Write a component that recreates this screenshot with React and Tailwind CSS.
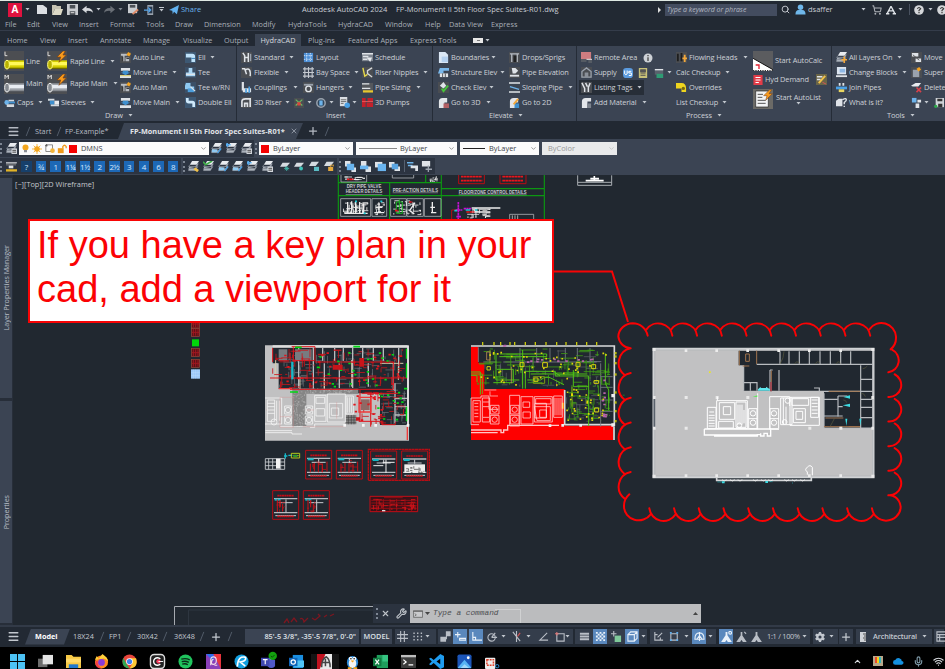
import React from 'react';
import { FaGear } from 'react-icons/fa6';
import { Menu, Search, ShoppingCart, Wrench, X, Plus, Wifi, Mic, ChevronUp, ChevronDown } from 'lucide-react';

/* ---------- small drawings, all on a 12 x 12 grid ---------- */
const W = '#dfe3e8';
const B = '#6db3ea';
const dark = <rect width="12" height="12" fill="#4a4d52" />;
const stack = (
  <>
    <path d="M4.500 0H12L9.500 4H2z" fill="#e8ebef" />
    <path d="M2 4L.500 6H8l3-4v2L8.500 8H.8M.8 8L.5 10.500H8L11 6" fill="#aab1bb" stroke="#7f8792" strokeWidth=".5" />
  </>
);
const glyphs = {
  autoL: <>{dark}<path d="M1 2h7v2H5v6H3V4H1zM6 6h4v4H6z" fill="#b9bdc3" /><path d="M9 0l3 2-2 3-3-2z" fill="#f4a321" /><path d="M3 5v5M7 7h3" stroke="#222" /></>,
  moveL: <><path d="M1 1h10v3H1zM0 9h12v3H0z" fill={W} /><path d="M3 4h6v2h2L6 9 1 6h2z" fill="#3e8fce" /><path d="M0 9.500h12" stroke="#e8d560" strokeWidth="1" /></>,
  moveM: <><path d="M1 1h10v3H1zM0 9h12v3H0z" fill={W} /><path d="M3 4h6v2h2L6 9 1 6h2z" fill="#3e8fce" /></>,
  ell: <><rect width="12" height="12" fill="#3d5873" /><path d="M1 2h7q3 0 3 3v6H7V6H1z" fill="#bfe2fa" /><path d="M7 7h4" stroke="#2f79b5" /></>,
  tee: <><rect width="12" height="12" fill="#3b4f66" /><path d="M4 1h4v5h3v4H1V6h3z" fill="#a9d6f5" /><path d="M1 8h10" stroke={W} strokeWidth="1.400" /></>,
  teew: <><rect width="12" height="12" fill="#3b4f66" /><path d="M1 1h5v4h4v3H0V4z" fill="#8ec9f2" /><path d="M3 7h7v4H3z" fill="#4b9ddc" /><path d="M6 5l5 5" stroke={W} strokeWidth="1.400" /></>,
  dbl: <><rect width="12" height="12" fill="#3d5873" /><path d="M1 1h3v3h4q3 0 3 3v4H8V7H4Q1 7 1 4z" fill="#cfe9fb" /></>,
  cap: <><circle cx="3" cy="6" r="2.600" fill={B} /><path d="M5 3h6v2H5zM3 8h8v3H3z" fill="#d4d9df" /><path d="M5 5h7v2H5z" fill="#3e8fce" /></>,
  sleeve: <><path d="M0 2h7v2H0zM3 8h9v2H3z" fill="#d4d9df" /><path d="M2 4h5v4H2z" fill="#3e8fce" /><path d="M7 4h5v4H7z" fill="#e8ebef" /></>,
  std: <>{dark}<path d="M2 1l2 3v7M8 1v10M4 6h4" stroke={W} strokeWidth="1.700" fill="none" /><path d="M10.500 2v8" stroke="#9aa2ad" strokeWidth="1.400" /></>,
  flex: <>{dark}<path d="M1 2h3l2 6M5 3q6-3 5 7" stroke={W} strokeWidth="1.600" fill="none" /></>,
  coup: <><path d="M2 0v8h9M2 10h9" stroke={W} strokeWidth="2.400" fill="none" /><path d="M9 5v7M5.500 7v5" stroke="#4b9ddc" strokeWidth="1.800" /></>,
  riser: <>{dark}<path d="M1 11V5q0-3 4-3h5v9M4 11V7h3v4" stroke={W} strokeWidth="1.800" fill="none" /></>,
  valve: <>{dark}<path d="M2 2l8 7M10 2L2 9" stroke="#6cba62" strokeWidth="1.400" /><path d="M4 5h4v4H4z" fill="#d8463c" /></>,
  layout: <><rect x="1" y="1" width="10" height="10" fill="#4d8fd6" /><path d="M1 4h10M1 8h10M4 1v10M8 1v10" stroke="#cfe3f8" strokeDasharray="1.500 1" /></>,
  grid: <path d="M0 2h12M0 6h12M0 10h12M2 0v12M6 0v12M10 0v12" stroke="#c4c9d0" strokeWidth="1.200" />,
  hang: <>{dark}<path d="M1 3h10" stroke="#9aa2ad" strokeWidth="2" /><circle cx="6" cy="7.500" r="3" stroke={W} fill="none" strokeWidth="1.600" /></>,
  ring: <><circle cx="6" cy="6" r="5" stroke="#9aa2ad" fill="#30465c" strokeWidth="1.800" /><path d="M4 3h4v6H4z" fill={B} /></>,
  doc: <><path d="M1 0h8v10H1z" fill="#d9dde2" /><path d="M2 3h6M2 5h6M2 7h3" stroke="#666" /><circle cx="9" cy="9" r="3" fill="#4aa0e4" /></>,
  sched: <><rect y="1" width="12" height="9" fill="#7e858f" /><path d="M0 2h12M1 5h6M1 8h5" stroke={W} strokeWidth="1.700" /><path d="M5 6h6l-2 5z" fill="#e8ebef" /></>,
  nip: <>{dark}<path d="M1 1l2 9 3-2" stroke="#e6d94a" strokeWidth="1.500" fill="none" /><path d="M11 1L6 4v3l5 4" fill="none" stroke="#d5d8dc" strokeWidth="1.500" /></>,
  size: <><rect y="1" width="12" height="8" fill="#55585d" /><path d="M0 2h8M0 7h9" stroke={W} strokeWidth="1.500" /><path d="M1 9h11v2.500H1z" fill="#e7c72f" /></>,
  pump: <><path d="M0 1h4v10H0zM6 1h6v4H6zM5 6h7v5H5z" fill="#c2202b" /><path d="M0 5h12" stroke="#ee5a5a" /></>,
  page: <><path d="M1 0h7l3 3v9H1z" fill="#dbe7f5" /><path d="M4 5h7v6H4z" fill="#b4d0ef" /></>,
  struct: <><path d="M2 1h10v3H6v3H0z" fill="#79b7ea" /><path d="M2 7h9v4H2z" fill={W} /><path d="M5 7v4M8 7v4" stroke="#555" /></>,
  check: <>{dark}<path d="M2 4l4-4 3 4-3 3z" fill={W} /><path d="M4 7l2 3 5-6" stroke="#46c33c" strokeWidth="2" fill="none" /></>,
  go3: <><path d="M1 12V5q0-4 4-4h5v5H7v6z" fill="#e2e5e9" /><path d="M6 7h6v5H6z" fill="#b25f63" /></>,
  go2: <><path d="M1 12V5q0-4 4-4h5v5H7v6z" fill="#e2e5e9" /><path d="M6 7h5v5H6z" fill="#3e8fce" /><path d="M5 8l5-6" stroke="#f3a83a" strokeWidth="2" /></>,
  drops: <>{dark}<path d="M1 2h10M3 2v9M9 2v9" stroke="#b7bcc3" strokeWidth="1.400" /><path d="M5 4h3v7H5z" fill="#222" /></>,
  pel: <>{dark}<path d="M3 1h4l3 3-3 3H4z" fill={W} /><path d="M1 9.500h10" stroke={W} strokeWidth="2" /></>,
  slope: <><rect width="12" height="12" fill="#3b4552" /><path d="M0 1h12M0 11h12" stroke={W} strokeWidth="1.600" /><path d="M1 5l10 3" stroke={B} strokeWidth="1.400" /></>,
  remote: <><path d="M0 0h11v8H0z" fill="#cf7c80" /><path d="M0 8h6v3H0zM8 8h4v4H8z" fill="#555b63" /><path d="M6 8h6" stroke="#eee" /></>,
  supply: <>{dark}<path d="M1 5l5-4 5 4v6H1z" fill="none" stroke="#9aa2ad" strokeWidth="1.400" /><path d="M4 6h4v5H4z" fill="#8a9099" /></>,
  tags: <>{dark}<path d="M1 1l3 6v4M5 1l2 4M10 1L8 6v5" stroke={W} strokeWidth="1.600" fill="none" /></>,
  mat: <><path d="M1 12V5q0-4 4-4h6v4H7v7z" fill="#e2e5e9" /><path d="M7 7h4v5H7z" fill="#7c838d" /></>,
  info: <><circle cx="6" cy="6" r="5.400" fill="#cdd1d6" /><path d="M6 5v4.500M6 2.400v1.400" stroke="#444" strokeWidth="1.600" /></>,
  us: <><rect width="12" height="12" rx="4" fill="#5b9bdf" /><path d="M2 3v4q1.500 2 3 0V3M10 4H7v2h3v3H7" stroke="#fff" fill="none" strokeWidth="1.200" /></>,
  calc: <><rect x="1" width="10" height="12" fill="#c8c178" /><path d="M3 2h6v3H3zM3 7h6M3 9h6" fill="#555" stroke="#555" /></>,
  mon: <><rect x="1" y="1" width="10" height="7" fill="#59616c" /><path d="M1 2h10" stroke={W} strokeWidth="1.600" /><path d="M3 7h8v5H3z" fill="#2f9b74" /></>,
  heads: <>{dark}<path d="M2 2v8M6 1v9" stroke="#1e1e1e" strokeWidth="2" /><path d="M9.500 3v8M7 7h5" stroke="#f3a83a" strokeWidth="2" /></>,
  over: <><path d="M0 1h6q5 0 5 6v4H6V7H0z" fill="#efd51e" /><circle cx="8" cy="7" r="1.800" fill="#76690f" /></>,
  layers: <>{stack}<path d="M9 5v7M6 8.500h6" stroke="#f3a83a" strokeWidth="1.800" /></>,
  change: <><path d="M1 0h10v8H1z" fill="#dbe4ef" /><path d="M4 2h6v4H4z" fill="#8fb9e6" /><path d="M0 10h12" stroke={W} strokeWidth="2" /></>,
  join: <><path d="M3 1h2v3H3zM7 1h2v3H7z" fill={W} /><path d="M0 5h12v3H0z" fill="#4aa0e4" /><path d="M3 8h6v3H3z" fill="#e8d560" /></>,
  what: <><path d="M0 4l3-2h4v8H0z" fill={W} /><path d="M7 3q5-3 4 1L9 6v2M9 9.500V11" stroke={W} strokeWidth="1.500" fill="none" /></>,
  move: <>{dark}<path d="M1 1h7v4H1zM5 7h6v4H5z" fill={W} /><path d="M2 3l7 6" stroke="#555" /></>,
  superb: <>{dark}<path d="M2 3h7v8H2z" fill="#9aa2ad" /><path d="M9 0l2 3-3 2-2-3z" fill="#f4a321" /></>,
  del: <><path d="M0 4l5-3h6L8 5H2z" fill="#e8ebef" /><path d="M6 6l5 5M11 6l-5 5" stroke="#d9414a" strokeWidth="1.700" /></>,
  tree: <><path d="M1 1h5v5H1z" fill={B} /><path d="M7 3h4v3H7zM5 7h4v5H5z" fill={W} /></>,
  disk: <><path d="M2 0h10v11H2z" fill="#cfd3d8" /><path d="M4 1h6v3H4zM5 7h5v4H5z" fill="#333" /><circle cx="2" cy="10" r="2" fill="#2ba84a" /></>,
  edit: <><rect width="12" height="12" fill="#6a6548" /><path d="M1 3h6M1 6h4" stroke={W} strokeWidth="1.500" /><path d="M3 10l7-8" stroke="#f1c24b" strokeWidth="2.200" /><path d="M7 9l4 2" stroke="#d55" /></>,
  demand: <><rect x="0.500" width="11" height="12" fill="#e23c48" /><path d="M3 3h6M3 6h6M3 9h4" stroke="#fff" strokeWidth="1.300" /></>,
  stackY: <>{stack}<path d="M7 8l4 3" stroke="#f1c24b" strokeWidth="3" /></>,
  stackG: <>{stack}<path d="M0 1l3 3 7-4" stroke="#3fae49" strokeWidth="1.800" fill="none" /></>,
  stackB: <>{stack}<path d="M1 7h6l-1 3H1z" fill="#8ec9f2" /><path d="M11 6l-4 5" stroke="#4aa0e4" strokeWidth="1.600" /></>,
  stackB2: <>{stack}<path d="M0 2h5M2 0L0 2l2 2" stroke="#58adf0" strokeWidth="1.600" fill="none" /></>,
  stackW: <>{stack}<path d="M6 6h6v6H6z" fill="#d3d7dd" /><path d="M7 8h4M7 10h4" stroke="#444" /></>,
  freeze: <><path d="M3 2h9L8 7H0z" fill="#d5dae0" /><path d="M8 6v6M5 9h6M6 7l4 4M10 7l-4 4" stroke="#41b6a8" strokeWidth="1" /></>,
  freezeD: <><path d="M3 2h9L8 7H0z" fill="#d5dae0" /><circle cx="8.500" cy="9" r="2.300" fill="#3fc2b8" /></>,
  lockB: <><path d="M3 1h9L8 6H0z" fill="#d5dae0" /><path d="M6 7h6v5H6z" fill="#5bbcc4" /></>,
  lockY: <><path d="M3 1h9L8 6H0z" fill="#d5dae0" /><path d="M5 7h6v5H5z" fill="#e5a83c" /><path d="M8 7V5h4v2" stroke="#e5a83c" fill="none" /></>,
  grp1: <><path d="M0 0h6v6H0zM7 7h5v5H7z" fill={W} /><path d="M2 3h8v7H2z" fill="#69b4ef" /></>,
  grp2: <><path d="M1 0h6v6H1zM6 6h6v6H6z" fill={W} /><path d="M0 5h9v4H0z" fill="#69b4ef" /></>,
  grp3: <><path d="M0 1h8v6H0z" fill={W} /><path d="M3 3h9v8H3z" fill="#69b4ef" /></>,
  grp4: <><path d="M0 1h6v6H0zM6 6h6v5H6z" fill={W} /><path d="M3 3h7v6H3z" fill="#5aa5e2" /></>,
  abc: <><path d="M0 2h7M1 5h5" stroke={B} strokeWidth="1.600" /><path d="M4 5h8v6H9V8H4z" fill={W} /></>,
  dimm: <><path d="M1 0h9v6H1z" fill={W} /><path d="M8 5v7M5 9h7" stroke="#9aa2ad" strokeWidth="1.400" /></>,
  ruler: <><path d="M0 1h11v4H0z" fill="#5e636b" /><path d="M0 2h12" stroke={W} /><path d="M3 5h5v3H3z" fill={W} /><path d="M0 9h12v2.500H0z" fill="#e2b427" /></>,
  bulb: <><circle cx="6" cy="4.500" r="4" fill="#f2a51c" /><path d="M4 8h4v3H4z" fill="#8b8f96" /></>,
  sun: <><circle cx="6" cy="6" r="3.300" fill="#f2a51c" /><path d="M6 0v12M0 6h12M2 2l8 8M10 2l-8 8" stroke="#f2a51c" /></>,
  vpf: <><path d="M1 1h8v8H1z" fill="none" stroke="#777" /><circle cx="9" cy="8" r="2.800" fill="#f2b53c" /><path d="M0 2h3M2 0v3" stroke="#555" /></>,
  unlock: <><path d="M1 5h7v6H1z" fill="#ef9a1a" /><path d="M7 5V3q2-3 4 0v2" stroke="#ef9a1a" strokeWidth="1.600" fill="none" /></>,
  person: <><circle cx="6" cy="3.500" r="3" fill="#6fb7ea" /><path d="M.500 11.500q0-5 3.500-5h4q3.500 0 3.500 5z" fill="#6fb7ea" /></>,
  share: <path d="M0 6L12 0 9.500 11 6 8 4.500 11 4 7z" fill="#62b1f0" />,
  tri: <path d="M6 1.500L10.500 10M6 1.500L1.500 10M3 7h6M0 10.500h4M8 10.500h4" stroke="#dfe3e8" strokeWidth="1.700" fill="none" />,
  q: <><circle cx="6" cy="6" r="5.800" fill="#d5d7da" /><path d="M4 4.500q2-3 4 0L6 6.500v1M6 8.500V10" stroke="#333" strokeWidth="1.400" fill="none" /></>,
  undo: <path d="M0 6l5-4v2.500q6-.5 7 5Q10 7 5 7.500V10z" fill="#d5d8dc" />,
  fnew: <path d="M1 1h6l4 3v6H1z" fill="#dcdfe3" />,
  fopen: <><path d="M1 1h4l1 1h4v3H4l-3 6z" fill="#c6c3b2" /><path d="M4 5h8l-2 6H1z" fill="#dcd9c6" /></>,
  save: <><path d="M0 0h12v12H0z" fill="#c9ccd0" /><path d="M3 1h6v4H3zM3 8h6v4H3z" fill="#4c5157" /><path d="M4 9h4v1H4z" fill="#eee" /></>,
  saveas: <><path d="M0 0h10v10H0z" fill="#c9ccd0" /><path d="M2 1h6v3H2z" fill="#4c5157" /><path d="M5 11l6-5" stroke="#e08a66" strokeWidth="2" /></>,
  phone: <><path d="M4 0h7v12H4z" fill="#9aa3ae" /><path d="M5 2h5v8H5z" fill="#28384c" /><path d="M0 6h7M5 3l3 3-3 3" stroke="#58a5e8" strokeWidth="1.500" fill="none" /></>,
};
const I = ({ n, c = 'size-[11px]' }) => <svg viewBox="0 0 12 12" className={'block shrink-0 ' + c}>{glyphs[n]}</svg>;
const Caret = ({ c = '' }) => (
  <svg viewBox="0 0 5 3" className={'block h-[3px] w-[5px] shrink-0 ' + c}><path d="M0.500 0h4L2.500 2.500z" fill="#c3c8cf" /></svg>
);

/* big pipe buttons */
const Pipe = ({ letter, y, bolt }) => (
  <svg viewBox="0 0 60 60" className="block size-5 shrink-0">
    <rect width="60" height="60" fill="#4c4e52" />
    <path d={letter === 'L' ? 'M3 2v12h7' : 'M3 15V3l5 7 5-7v12'} stroke="#dadada" strokeWidth="3" fill="none" />
    <path d="M8 28h52v26H8z" fill={y ? '#d6cf00' : '#9da1a8'} />
    <path d="M14 33h46v10H14z" fill={y ? '#fff95a' : '#e9ecf2'} />
    <path d="M8 52h52" stroke={y ? '#6f6b00' : '#55585e'} strokeWidth="4" />
    <ellipse cx="9" cy="41" rx="7" ry="13" fill={y ? '#b9b100' : '#85898f'} stroke={y ? '#fffb80' : '#f1f1f1'} strokeWidth="3" />
    {bolt && <path d="M48 0L30 18h11l-5 16 22-22H48l7-12z" fill="#f79a1c" stroke="#7c3f10" strokeWidth="2" />}
  </svg>
);
const AutoCalc = () => (
  <svg viewBox="0 0 60 60" className="block size-5 shrink-0">
    <rect width="60" height="60" fill="#5b5c5f" /><path d="M0 22l60 34v4H0z" fill="#fff" /><path d="M0 22l60 34" stroke="#111" strokeWidth="3" /><path d="M8 42h10v12" stroke="#e02030" strokeWidth="4" fill="none" /><path d="M0 59h60" stroke="#111" strokeWidth="3" strokeDasharray="4 3" />
  </svg>
);
const AutoList = () => (
  <svg viewBox="0 0 60 60" className="block size-5 shrink-0">
    <rect width="60" height="60" fill="#6b6a66" /><path d="M8 6h38v48H8z" fill="#f2f3f4" stroke="#222" strokeWidth="2" /><path d="M14 16h16M14 25h14M14 34h24M14 43h24" stroke="#555" strokeWidth="3" /><path d="M50 2L32 20h10l-4 14 20-20H48l8-12z" fill="#f79a1c" stroke="#7c3f10" strokeWidth="1.500" />
  </svg>
);

/* ---------- ribbon ---------- */
const Row = ({ icon, w, t, caret, children, c = '' }) => (
  <div className={'flex h-[15px] shrink-0 items-center whitespace-nowrap ' + c}>
    {icon && <I n={icon} c="mr-[2px] size-[11px]" />}
    {t && <span className={'shrink-0 ' + (w || '')}>{t}</span>}
    {caret && <Caret />}
    {children}
  </div>
);
const Panel = ({ w, label, lab, caret = true, children }) => (
  <section className={'flex h-[75px] shrink-0 flex-col border-r border-[#252c37] bg-[#3b4453] ' + w}>
    <div className="flex h-[64px] pt-[4px]">{children}</div>
    <div className={'flex items-center gap-[5px] leading-[11px] ' + lab}>{label}{caret && <Caret />}</div>
  </section>
);

const Ribbon = () => (
  <div className="flex h-[75px] overflow-hidden text-[7.400px] tracking-[-0.120px] text-[#cdd1d7]">
    <Panel w="w-[237px]" label="Draw" lab="pl-[105px]">
      <div className="flex w-[47px] shrink-0 flex-col pl-[4px]">
        <div className="flex h-[22.500px] items-center gap-[2px]"><Pipe letter="L" y />Line</div>
        <div className="flex h-[22.500px] items-center gap-[2px]"><Pipe letter="M" />Main</div>
        <Row icon="cap" t="Caps" w="w-[21px]" caret />
      </div>
      <div className="flex w-[73px] shrink-0 flex-col">
        <div className="flex h-[22.500px] items-center gap-[3px]"><Pipe letter="L" y bolt /><span className="w-[37px] whitespace-nowrap">Rapid Line</span><Caret /></div>
        <div className="flex h-[22.500px] items-center gap-[3px]"><Pipe letter="M" bolt /><span className="w-[40px] whitespace-nowrap">Rapid Main</span><Caret /></div>
        <Row icon="sleeve" t="Sleeves" w="w-[29px]" caret c="pl-px" />
      </div>
      <div className="flex w-[65px] shrink-0 flex-col">
        <Row icon="autoL" t="Auto Line" />
        <Row icon="moveL" t="Move Line" w="w-[39px]" caret />
        <Row icon="autoL" t="Auto Main" />
        <Row icon="moveM" t="Move Main" w="w-[42px]" caret />
      </div>
      <div className="flex flex-col">
        <Row icon="ell" t="Ell" w="w-[12px]" caret />
        <Row icon="tee" t="Tee" />
        <Row icon="teew" t="Tee w/RN" />
        <Row icon="dbl" t="Double Ell" />
      </div>
    </Panel>

    <Panel w="w-[196px]" label="Insert" lab="pl-[89px]" caret={false}>
      <div className="flex w-[62px] shrink-0 flex-col pl-[4px]">
        <Row icon="std" t="Standard" w="w-[35px]" caret />
        <Row icon="flex" t="Flexible" w="w-[30px]" caret />
        <Row icon="coup" t="Couplings" w="w-[39px]" caret />
        <Row icon="riser" t="3D Riser" w="w-[31px]" caret>
          <I n="valve" c="ml-[4px] mr-[3px] size-[10px]" /><Caret />
          <I n="ring" c="ml-[4px] mr-[3px] size-[10px]" /><Caret />
          <I n="doc" c="ml-[5px] mr-[2px] size-[11px]" /><Caret />
        </Row>
      </div>
      <div className="flex w-[63px] shrink-0 flex-col pl-[4px]">
        <Row icon="layout" t="Layout" />
        <Row icon="grid" t="Bay Space" w="w-[38px]" caret />
        <Row icon="hang" t="Hangers" w="w-[32px]" caret />
      </div>
      <div className="flex flex-col">
        <Row icon="sched" t="Schedule" />
        <Row icon="nip" t="Riser Nipples" w="w-[48px]" caret />
        <Row icon="size" t="Pipe Sizing" w="w-[41px]" caret />
        <Row icon="pump" t="3D Pumps" />
      </div>
    </Panel>

    <Panel w="w-[144px]" label="Elevate" lab="pl-[56px]">
      <div className="flex w-[76px] shrink-0 flex-col pl-[5px]">
        <Row icon="page" t="Boundaries" w="w-[40px]" caret />
        <Row icon="struct" t="Structure Elev" w="w-[49px]" caret />
        <Row icon="check" t="Check Elev" w="w-[38px]" caret />
        <Row icon="go3" t="Go to 3D" w="w-[35px]" caret />
      </div>
      <div className="flex flex-col">
        <Row icon="drops" t="Drops/Sprigs" />
        <Row icon="pel" t="Pipe Elevation" />
        <Row icon="slope" t="Sloping Pipe" w="w-[46px]" caret />
        <Row icon="go2" t="Go to 2D" />
      </div>
    </Panel>

    <Panel w="w-[255px]" label="Process" lab="pl-[109px]">
      <div className="flex w-[99px] shrink-0 flex-col pl-[2px]">
        <Row icon="remote" t="Remote Area" w="w-[49px]" c="pl-[2px]"><I n="info" c="size-[10px]" /></Row>
        <Row icon="supply" t="Supply" w="w-[29px]" c="pl-[2px]">
          <I n="us" c="size-[10px]" /><I n="calc" c="ml-[5px] size-[10px]" /><I n="mon" c="ml-[6px] mr-[3px] size-[10px]" /><Caret />
        </Row>
        <Row icon="tags" t="Listing Tags" w="w-[43px]" caret c="w-[65px] bg-[#272e38] pl-[2px]" />
        <Row icon="mat" t="Add Material" w="w-[48px]" caret c="pl-[2px]" />
      </div>
      <div className="flex w-[77px] shrink-0 flex-col">
        <Row icon="heads" t="Flowing Heads" w="w-[54px]" caret />
        <Row t="Calc Checkup" w="w-[49px]" caret />
        <Row icon="over" t="Overrides" />
        <Row t="List Checkup" w="w-[46px]" caret />
      </div>
      <div className="flex flex-col">
        <div className="flex h-[21px] items-center gap-[2px]"><AutoCalc />Start AutoCalc</div>
        <div className="flex h-[17px] items-center gap-[2px] whitespace-nowrap"><I n="demand" c="size-[10px]" /><span className="w-[49px]">Hyd Demand</span><I n="edit" /></div>
        <div className="flex h-[21px] items-center gap-[3px]"><AutoList /><div className="flex flex-col items-center leading-[9px]">Start AutoList<Caret /></div></div>
      </div>
    </Panel>

    <Panel w="w-[120px]" label="Tools" lab="pl-[55px]">
      <div className="flex w-[79px] shrink-0 flex-col pl-[4px]">
        <Row icon="layers" t="All Layers On" w="w-[48px]" caret />
        <Row icon="change" t="Change Blocks" w="w-[53px]" caret />
        <Row icon="join" t="Join Pipes" />
        <Row icon="what" t="What is It?" />
      </div>
      <div className="flex flex-col">
        <Row icon="move" t="Move" />
        <Row icon="superb" t="Super" />
        <Row icon="del" t="Delete" />
        <Row icon="tree"><Caret /><I n="disk" c="ml-[5px] size-[10px]" /></Row>
      </div>
    </Panel>
  </div>
);

const menus = [['File', 'w-[22px]'], ['Edit', 'w-[25px]'], ['View', 'w-[27px]'], ['Insert', 'w-[31px]'], ['Format', 'w-[36px]'], ['Tools', 'w-[29px]'], ['Draw', 'w-[29px]'], ['Dimension', 'w-[48px]'], ['Modify', 'w-[36px]'], ['HydraTools', 'w-[50px]'], ['HydraCAD', 'w-[47px]'], ['Window', 'w-[40px]'], ['Help', 'w-[24px]'], ['Data View', 'w-[42px]'], ['Express', 'w-[40px]']];
const tabs1 = [['Home', 'w-[33px]'], ['View', 'w-[28px]'], ['Insert', 'w-[32px]'], ['Annotate', 'w-[43px]'], ['Manage', 'w-[40px]'], ['Visualize', 'w-[41px]'], ['Output', 'w-[31px]']];
const tabs2 = [['Plug-ins', 'w-[40px]'], ['Featured Apps', 'w-[62px]'], ['Express Tools', 'w-[63px]']];

const Header = () => (
  <>
    <div className="flex h-[18px] items-center border-t border-[#dfe9e3] bg-[#222933] text-[7.500px] text-[#c9cdd3]">
      <div className="ml-[8px] flex h-[14px] w-[14px] shrink-0 items-center justify-center bg-[#e0123f] text-[10px] font-bold text-white">A</div>
      <Caret c="ml-[3px]" />
      <I n="fnew" c="ml-[6px] size-[12px]" />
      <I n="fopen" c="ml-[3px] size-[12px]" />
      <I n="save" c="ml-[4px] size-[11px]" />
      <I n="undo" c="ml-[4px] size-[11px]" />
      <Caret c="ml-[3px]" />
      <I n="undo" c="ml-[3px] size-[11px] -scale-x-100 opacity-40" />
      <Caret c="ml-[3px] opacity-60" />
      <I n="saveas" c="ml-[5px] size-[11px]" />
      <I n="phone" c="ml-[5px] size-[10px]" />
      <span className="ml-[4px] flex w-[7px] shrink-0 flex-col items-center gap-[1px]"><span className="h-px w-[5px] bg-[#c3c8cf]" /><Caret /></span>
      <I n="share" c="ml-[4px] size-[10px]" />
      <span className="ml-[2px] w-[121px] shrink-0 text-[#69b3ef]">Share</span>
      <span className="w-[94px] shrink-0 whitespace-nowrap">Autodesk AutoCAD 2024</span>
      <span className="w-[261px] shrink-0 whitespace-nowrap">FP-Monument II 5th Floor Spec Suites-R01.dwg</span>
      <svg viewBox="0 0 4 6" className="h-[6px] w-[4px] shrink-0"><path d="M1 0l3 3-3 3z" fill="#ddd" /></svg>
      <span className="ml-[4px] h-[12px] w-[112px] shrink-0 bg-[#434c5f] pl-[2px] text-[7px] italic leading-[11px] text-[#b4b9c2]">Type a keyword or phrase</span>
      <Search className="ml-[4px] size-[9px] shrink-0 text-[#c9cdd3]" strokeWidth={2.5} />
      <I n="person" c="ml-[5px] size-[11px]" />
      <span className="ml-[2px] w-[53px] shrink-0">dsaffer</span>
      <Caret />
      <ShoppingCart className="ml-[6px] size-[10px] shrink-0 text-[#aeb2b8]" strokeWidth={2.5} />
      <I n="tri" c="ml-[4px] size-[10px]" />
      <Caret c="ml-[2px]" />
      <span className="ml-[6px] h-[11px] w-px shrink-0 bg-[#4a5260]" />
      <I n="q" c="ml-[4px] size-[10px]" />
      <Caret c="ml-[4px]" />
      <I n="q" c="ml-[4px] size-[10px]" />
    </div>
    <div className="flex h-[13px] items-center border-b border-[#343c4a] bg-[#222933] pl-[5px] text-[7.300px] text-[#a9afb8]">
      {menus.map(([t, w]) => <span key={t} className={'shrink-0 whitespace-nowrap ' + w}>{t}</span>)}
    </div>
    <div className="flex h-[15px] items-end bg-[#222933] text-[7.300px] leading-[12px] text-[#a9afb8]">
      <div className="flex pl-[7px]">{tabs1.map(([t, w]) => <span key={t} className={'shrink-0 ' + w}>{t}</span>)}</div>
      <span className="h-[12px] w-[46px] shrink-0 bg-[#3b4453] text-center text-[#d5d9de]">HydraCAD</span>
      <div className="flex pl-[7px]">{tabs2.map(([t, w]) => <span key={t} className={'shrink-0 whitespace-nowrap ' + w}>{t}</span>)}</div>
      <div className="flex h-[12px] items-center gap-[2px]"><span className="flex h-[5px] w-[10px] items-center justify-center bg-[#e8e8e8]"><span className="h-px w-[3px] bg-[#777]" /></span><Caret /></div>
    </div>
  </>
);

const Slash = ({ c = '' }) => (
  <svg viewBox="0 0 6 12" className={'h-[11px] w-[6px] shrink-0 ' + c}><path d="M1 11L5 1" stroke="#56606f" /></svg>
);

const FileTabs = () => (
  <div className="flex h-[18px] items-center bg-[#222933] pt-[2px] text-[7.300px] text-[#b4b9c2]">
    <Menu className="ml-[7px] size-[13px] shrink-0" strokeWidth={2.5} />
    <Slash c="ml-[5px]" />
    <span className="ml-[4px] w-[21px] shrink-0">Start</span>
    <Slash />
    <span className="ml-[3px] w-[53px] shrink-0">FP-Example*</span>
    <div className="flex h-full w-[185px] shrink-0 items-center bg-[#3b4453] pl-[12px] font-bold text-[#e2e5e9] [clip-path:polygon(6px_0,100%_0,178px_100%,0_100%)]">
      <span className="w-[160px] shrink-0 whitespace-nowrap">FP-Monument II 5th Floor Spec Suites-R01*</span>
      <X className="size-[8px] text-[#9ba2ad]" strokeWidth={2.5} />
    </div>
    <Plus className="ml-[4px] size-[12px] shrink-0" strokeWidth={2.5} />
    <Slash c="ml-[5px]" />
  </div>
);

const Grip = ({ c = '' }) => <span className={'h-[11px] w-[2px] shrink-0 border-l-2 border-dotted border-[#7d8693] ' + c} />;
const Combo = ({ c, children, dim }) => (
  <div className={'flex h-[13px] shrink-0 items-center whitespace-nowrap pr-[2px] ' + c + (dim ? ' bg-[#e9eaeb] text-[#999]' : ' bg-[#fbfbfb] text-[#40444a]')}>
    {children}<ChevronDown className={'ml-auto size-[7px] ' + (dim ? 'text-[#bbb]' : 'text-[#777]')} strokeWidth={2.5} />
  </div>
);
const nums = ['?', '¾', '1', '1¼', '1½', '2', '2½', '3', '4', '6', '8'];
const tools1 = ['stackY', 'stackG', 'stackB', 'stackB', 'stackB2', 'stackW'];
const tools2 = ['freeze', 'freezeD', 'lockB', 'lockY'];
const tools3 = ['grp1', 'grp2', 'grp3', 'grp4'];

const Toolbars = () => (
  <div className="h-[36px] bg-[#3b4453] pt-px text-[7.400px]">
    <div className="flex h-[17px] items-center">
      <div className="flex h-full w-[254px] shrink-0 items-center bg-[#2c3441]">
        <Grip /><I n="stackW" c="ml-[4px] mr-[2px] size-[11px]" />
        <Combo c="w-[190px] pl-[2px]">
          <I n="bulb" c="size-[9px]" /><I n="sun" c="ml-[2px] size-[10px]" /><I n="vpf" c="ml-[3px] size-[10px]" /><I n="unlock" c="ml-[2px] size-[10px]" />
          <span className="ml-[2px] size-[8px] bg-[#f50000]" /><span className="ml-[4px]">DMNS</span>
        </Combo>
        <I n="stackB" c="ml-[2px] size-[11px]" /><I n="stackB2" c="ml-[4px] size-[11px]" /><I n="stackW" c="ml-[4px] size-[11px]" />
      </div>
      <Grip c="ml-px mr-[2px]" />
      <Combo c="w-[94px] pl-[2px]"><span className="size-[8px] bg-[#f50000]" /><span className="ml-[4px]">ByLayer</span></Combo>
      <Combo c="ml-[3px] w-[101px] pl-[3px]"><span className="h-px w-[38px] bg-[#888]" /><span className="ml-[3px]">ByLayer</span></Combo>
      <Combo c="ml-[3px] w-[79px] pl-[3px]"><span className="h-px w-[22px] bg-[#222]" /><span className="ml-[4px]">ByLayer</span></Combo>
      <Combo c="ml-[3px] w-[75px] pl-[6px]" dim>ByColor</Combo>
    </div>
    <div className="mt-px flex h-[16px] items-center">
      <div className="flex h-full w-[181px] shrink-0 items-center bg-[#2c3441]">
        <Grip /><I n="ruler" c="ml-[4px] mr-[4px] size-[11px]" />
        {nums.map((n, i) => (
          <span key={n} className="flex w-[14.700px] shrink-0">
            <span className={'h-[11px] w-[10.500px] text-center text-[8px] leading-[11px] tracking-tighter text-[#d6e8fb] ' + (i === 0 ? 'bg-[#17406b]' : 'bg-[#1d68b6]')}>{n}</span>
          </span>
        ))}
      </div>
      <div className="ml-[2px] flex h-full w-[154px] shrink-0 items-center bg-[#2c3441]">
        <Grip c="mr-[3px]" />
        {tools1.map((n, i) => <span key={i} className="w-[14.800px] shrink-0"><I n={n} c="size-[11px]" /></span>)}
        <span className="mr-[3px] h-[12px] w-px bg-[#56606f]" />
        {tools2.map((n) => <span key={n} className="w-[14.600px] shrink-0"><I n={n} c="size-[10px]" /></span>)}
      </div>
      <div className="ml-[2px] flex h-full w-[96px] shrink-0 items-center bg-[#2c3441]">
        <Grip c="mr-[4px]" />
        {tools3.map((n) => <span key={n} className="w-[14.800px] shrink-0"><I n={n} c="size-[11px]" /></span>)}
        <span className="mr-[2px] h-[12px] w-px bg-[#56606f]" />
        <I n="abc" c="size-[11px]" /><I n="dimm" c="ml-[3px] size-[11px]" />
      </div>
    </div>
  </div>
);

/* ---------- model space; each group is drafted at three units per pixel ---------- */
const rng = (seed) => () => { seed = (seed * 16807) % 2147483647; return seed / 2147483647; };
const scatter = (seed, count, x, y, w, h, min, max) => {
  const r = rng(seed * 7919);
  let d = '';
  for (let i = 0; i < count; i++) {
    const px = x + r() * w, py = y + r() * h, len = min + r() * (max - min);
    d += r() > 0.5 ? `M${px.toFixed(1)} ${py.toFixed(1)}h${Math.min(len, x + w - px).toFixed(1)}` : `M${px.toFixed(1)} ${py.toFixed(1)}v${Math.min(len, y + h - py).toFixed(1)}`;
  }
  return d;
};
const specks = (seed, count, x, y, w, h, sw = 7, sh = 5) => {
  const r = rng(seed * 7919);
  let d = '';
  for (let i = 0; i < count; i++) d += `M${(x + r() * w).toFixed(1)} ${(y + r() * h).toFixed(1)}h${sw}v${sh}h-${sw}z`;
  return d;
};

const cloud = (() => {
  let d = 'M62 115A40 40 0 0 1 25 80A44 41 0 0 1 68 40A46 46 0 0 1 113 77';
  for (let i = 0; i < 9; i++) { const x = 109 + i * 74.2; d += `M${x} 59A43 43 0 0 1 ${x + 78} 77`; }
  d += 'M778 58A44 44 0 0 1 858 80A46 46 0 0 1 842 118';
  for (let i = 0; i < 6; i++) { const y = 115 + i * 73.8; d += `M${i ? 854 : 846} ${y + 4}A36 36 0 0 1 835 ${y + 72}`; }
  d += 'M854 560A42 42 0 0 1 872 590A44 42 0 0 1 828 632A43 43 0 0 1 786 595M835 556Q846 554 856 562';
  for (let i = 0; i < 9; i++) { const x = 118 + i * 74.2; d += `M${x + 79} 613A43 43 0 0 1 ${x} 595`; }
  d += 'M122 613A44 42 0 0 1 42 590A46 46 0 0 1 58 553';
  for (let i = 0; i < 6; i++) { const y = 115 + i * 74.2; d += `M44 ${y + 80}A45 45 0 0 1 62 ${y}`; }
  return d;
})();

/* building core: stair and elevator block */
const Core = ({ c, x2 = 0, sw = 2 }) => (
  <g stroke={c} fill="none" strokeWidth={sw}>
    <path d="M0 8h30v-6h24v40h28M0 8v80h24M6 16h22v64H6zM10 24h12M10 34h12M10 44h12M10 54h12M10 64h12M34 8h22v72H34zM36 20h18M36 34h18M36 66h18" />
    <path d="M58 30h26v26H58zM58 60h26v26H58zM118 30h26v26h-26zM118 60h26v26h-26zM116 0h30v92h-30z" />
    <circle cx="71" cy="43" r="8" /><circle cx="71" cy="73" r="8" /><circle cx="131" cy="43" r="8" /><circle cx="131" cy="73" r="8" />
    <path d="M150 4h36v82h-36zM156 20h20v16h-20zM156 50h22v18h-22zM190 4h54v76h-54zM190 34h48v42h-40zM206 44h20v22h-20zM194 10h46v16h-46zM248 2h26v64h-26zM252 8v52M258 8v52M264 8v52M270 8v52" />
    <path d={`M0 104h90v8h8v-8h12v-14h${174 + x2}M0 112h80`} strokeWidth="4" />
  </g>
);

const Sheet = ({ x, y, w = 78, h = 86, seed, kind = 'a' }) => (
  <g>
    <path d={`M${x} ${y}h${w}v${h}h-${w}z`} stroke="#b80d15" fill="none" strokeWidth="3" />
    <path d={`M${x + 14} ${y + 15}h${w - 28}`} stroke="#c40d16" strokeWidth="5" strokeDasharray="6 1" />
    <path d={`M${x + 4} ${y + 24}h${w - 8}M${x + 4} ${y + h - 20}h${w - 8}`} stroke="#b7babf" strokeWidth="4" />
    <path d={`M${x + 18} ${y + 36}h${w - 36}M${x + (kind === 'c' ? 40 : w / 2)} ${y + 26}v${kind === 'c' ? 40 : 12}M${x + 8} ${y + h - 11}h${w - 16}`} stroke="#c9cbd0" strokeWidth="3" />
    <path d={`M${x + 6} ${y + 27}h18`} stroke="#14b8c4" strokeWidth="6" />
    {kind === 'w' ? <path d={`M${x + 8} ${y + 40}h62v26h-62z`} fill="#eee" /> : kind === 'l' ? <path d={`M${x + 8} ${y + 44}h30M${x + 36} ${y + 34}h36M${x + 46} ${y + 26}v40`} stroke="#eee" strokeWidth="3" /> : (
      <>
        <path d={kind === 'c' ? `M${x + 14} ${y + 26}v38M${x + 22} ${y + 28}v22M${x + 30} ${y + 40}v22` : `M${x + 14} ${y + 40}v26M${x + 26} ${y + 38}v26M${x + 38} ${y + 38}v28M${x + 50} ${y + 40}v26M${x + 64} ${y + 34}v30`} stroke="#d01018" strokeWidth="3" />
        <path d={scatter(seed, 9, x + 10, y + 30, kind === 'c' ? 28 : w - 22, 34, 4, 16)} stroke="#d01018" strokeWidth="2" />
      </>
    )}
    {kind === 'w' && <path d={scatter(seed, 16, x + 8, y + 42, 60, 24, 4, 14)} stroke="#333" strokeWidth="2" />}
    <path d={`M${x + 14} ${y + h - 9}h${w - 28}`} stroke="#d01018" strokeWidth="5" strokeDasharray="5 1" />
  </g>
);

const Drawing = () => (
  <svg viewBox="13 175 932 450" className="block h-[450px] w-[932px]">
    {/* detail sheets along the top edge */}
    <g transform="translate(315 120) scale(.33333)" fill="none">
      <path d="M70 165v150M224 188v130M379 165v150M688 165v150M70 188h309M70 227h618M379 206h309M332 165v24" stroke="#0d9612" strokeWidth="3.500" />
      <path d="M78 160h77v26H78zM232 160h64v14h-64zM77 236h90v53H77zM171 236h44v53h-44zM227 236h47v53h-47zM276 236h49v53h-49zM328 236h50v53h-50zM584 300v-17h72v17" stroke="#a9adb2" strokeWidth="2.500" />
      <path d={scatter(11, 40, 84, 246, 76, 34, 6, 18) + scatter(4, 16, 176, 244, 34, 40, 6, 14) + scatter(5, 44, 230, 242, 88, 42, 4, 16) + scatter(9, 14, 342, 166, 28, 20, 4, 10) + scatter(7, 14, 84, 170, 66, 10, 8, 24) + scatter(31, 26, 456, 266, 70, 28, 8, 26)} stroke="#f1f1f1" strokeWidth="2.500" />
      <path d="M88 280h70M98 246v34M110 244v34M122 244v34M134 246v34M146 250v28M178 278h30M192 250v28M182 262h20M470 264h86M470 276h56M352 246v34M346 262h14M348 278h16M300 248l-16 24 14 10" stroke="#ececec" strokeWidth="4" />
      <path d="M244 246h18v34h-18zM253 238v44" stroke="#19b51f" strokeWidth="3" />
      <path d="M431 160h77v31h-77zM555 160h78v31h-78zM410 300v-30h24" stroke="#b70d14" strokeWidth="3" />
      <path d="M438 170h62M438 182h64M562 170h62M562 182h62M282 246h10M240 272h10M96 178h20M454 276h24" stroke="#e8141c" strokeWidth="5" strokeDasharray="8 1" />
      <path d="M430 246v52M422 270h20M446 266h24M424 290h14" stroke="#c012d0" strokeWidth="5" strokeDasharray="7 1" />
      <path d="M418 272h8M452 270h14M480 270h8M120 244h6M196 244h6M146 280h6" stroke="#19c9d4" strokeWidth="5" />
      <path d="M788 166v30h102v-30M788 187h102" stroke="#a9adb2" strokeWidth="3" />
      <path d="M812 182h54M838 168v14M826 176h26" stroke="#fff" strokeWidth="5" />
      <path d="M592 286v12M600 286v12M608 286v12" stroke="#aaa" strokeWidth="3" />
      <g fill="#c5c8cc" fontFamily="Liberation Sans, Arial, sans-serif" fontWeight="bold" fontSize="13.500" textAnchor="middle">
        <text x="147" y="203" textLength="104" lengthAdjust="spacingAndGlyphs">DRY PIPE VALVE</text>
        <text x="147" y="220" textLength="110" lengthAdjust="spacingAndGlyphs" textDecoration="underline">HEADER DETAILS</text>
        <text x="301" y="215" textLength="136" lengthAdjust="spacingAndGlyphs" textDecoration="underline">PRE-ACTION DETAILS</text>
        <text x="533" y="221" textLength="204" lengthAdjust="spacingAndGlyphs" textDecoration="underline">FLOOR/ZONE CONTROL DETAILS</text>
      </g>
    </g>

    {/* first floor plan, legend and details */}
    <g transform="translate(180 310) scale(.33333)" fill="none">
      {[42, 67, 128, 160].map((y) => <g key={y}><rect x="34" y={y - 12} width="25" height="24" fill="#5a1218" stroke="#9c4a3c" strokeWidth="2" /><path d={`M40 ${y - 10}v20M47 ${y - 10}v20M54 ${y - 10}v20M36 ${y}h22`} stroke="#a01820" strokeWidth="3" /></g>)}
      <rect x="36" y="88" width="21" height="21" fill="#00d60a" />
      <rect x="33" y="178" width="27" height="28" fill="#9cc8f7" />
      <path d="M40 178v28M47 178v28M54 178v28M33 188h27M33 197h27" stroke="#c6e0fb" />
      <path d="M255 106h432v286H255z" fill="#c1c1c2" />
      <path d="M278 112h403v233H600V250H405V236H296V160h-18z" fill="#212830" />
      <path d="M278 106h405v7H278z" fill="#dcdcdc" />
      <path d={scatter(21, 40, 296, 112, 100, 122, 8, 30) + scatter(22, 56, 400, 114, 275, 118, 8, 34) + scatter(23, 40, 600, 236, 78, 106, 8, 28)} stroke="#6f757c" strokeWidth="2" />
      <path d="M428 112v40M464 112v40M490 112v40M518 112v122M548 112v40M580 112v40M610 112v40M656 112v76M400 112v124M478 160v74M433 160v76M565 160v70M640 160v80M290 160v40M356 112v122M645 220v120M645 265h36M645 290h36M645 315h36" stroke="#b9bbbe" strokeWidth="4" />
      <path d="M515 150v80M600 160h70M360 200v40M433 200v36M655 170v40M287 150v60" stroke="#d6cfae" strokeWidth="3" />
      <path d="M296 118h26v34h-26zM345 118h50v34h-50z" fill="#777b80" />
      <path d="M337 236h42v116h-42zM379 236h156v15H379zM497 315h32v28h-32z" fill="#858585" />
      <path d={scatter(61, 120, 337, 238, 42, 114, 2, 6) + scatter(62, 80, 380, 237, 150, 13, 2, 6)} stroke="#bdbdbd" strokeWidth="1.500" />
      <path d="M497 322h32M497 330h32M497 338h32M505 315v28M514 315v28M522 315v28" stroke="#333" strokeWidth="1.500" />
      <g stroke="#f4f4f4" strokeWidth="2.500">
        <path d="M255 264h50v78h-50M262 270h22v64h-22zM262 280h22M262 290h22M262 300h22M262 310h22M290 272v60M298 272v60M314 288h20v24h-20zM314 318h20v24h-20zM376 288h22v24h-22zM376 318h22v24h-22zM404 256h34v78h-34zM408 262h26v18h-26zM408 296h26v22h-26zM442 252h54v84h-54zM448 280h40v44h-40zM454 294h22v22h-22zM498 258h22v54h-22zM502 262v46M508 262v46M514 262v46M300 350h80M390 352h14v-10h90M256 362h80M256 368h80M336 368v4h30" />
        <circle cx="324" cy="300" r="8" /><circle cx="324" cy="330" r="8" /><circle cx="387" cy="300" r="8" /><circle cx="387" cy="330" r="8" /><circle cx="282" cy="336" r="9" />
      </g>
      <path d="M258 300h3M300 262h40v90h-40zM368 350h130M300 320h36M380 300h22M470 276v50" stroke="#d98d8d" strokeWidth="1" />
      <path d={scatter(71, 44, 278, 112, 122, 122, 6, 34) + scatter(72, 78, 402, 116, 275, 112, 5, 26) + scatter(73, 40, 535, 240, 140, 104, 6, 26)} stroke="#c9141a" strokeWidth="2.500" />
      <path d="M270 204h412M335 110h70v44M337 152h66M405 156h235v82H330M540 240v94M536 334h70v10h40M572 250v100M545 250h110M340 112v40M278 114v42" stroke="#e0141b" strokeWidth="3" />
      <path d="M682 350v40M537 262h36v44h-36zM296 236h40" stroke="#ef3a3a" strokeWidth="4" />
      <path d="M543 268h26v32h-26z" fill="#8d6a66" />
      <path d={specks(81, 26, 405, 118, 265, 110) + specks(82, 12, 590, 240, 86, 96)} fill="#00d814" />
      <path d={specks(83, 26, 300, 115, 360, 115) + specks(84, 18, 520, 240, 90, 90)} fill="#e0141b" />
      <path d="M458 165h30v14h-30zM538 144h14v26h-14zM528 322h12v10h-12z" fill="#c9141a" />
      <path d="M680 116v30M680 160v44M680 290v44M672 236h12M345 112h20M520 110h20M330 246h24" stroke="#00d814" strokeWidth="5" />
      <path d="M337 156v52" stroke="#18b8c8" strokeWidth="7" />
      <path d="M684 108v235" stroke="#e9e9e9" strokeWidth="4" />
      <path d="M490 342h8v8h-8zM546 342h8v8h-8zM583 342h8v8h-8zM680 342h8v8h-8z" fill="#f6f6f6" />
      <path d="M256 446h58v32h-58zM256 456h58M256 467h58M266 446v32M278 446v32M302 446v32" stroke="#cfd2d6" strokeWidth="2.500" />
      <path d="M288 446h12v30h-12z" fill="#f3f3f3" />
      <path d="M316 430v16M312 438h10M325 436h12" stroke="#18b8c8" strokeWidth="4" />
      <path d="M334 430h25v14h-25zM340 437h16" stroke="#b6c91c" strokeWidth="3" />
      <path d="M340 434h12v7h-12z" fill="#2a9a2a" />
      <Sheet x={377} y={421} seed={91} /><Sheet x={469} y={421} seed={92} kind="a" />
      <path d="M565 418h183v93H565z" stroke="#b80d14" strokeWidth="4" strokeDasharray="9 1" />
      <Sheet x={572} y={423} h={84} seed={93} kind="l" /><Sheet x={665} y={423} h={84} seed={94} kind="w" />
      <Sheet x={278} y={542} seed={95} kind="c" /><Sheet x={370} y={542} seed={96} kind="c" />
      <path d="M570 559h143v46H570z" fill="#3a1218" stroke="#c40d16" strokeWidth="3" />
      <path d="M612 563h56M574 571h136M574 579h136M574 587h136M574 595h136M590 567v36M610 567v36M630 567v36M650 567v36M675 567v36M695 567v36" stroke="#a50d14" strokeWidth="2.500" />
      <path d={scatter(97, 40, 572, 568, 134, 32, 5, 18)} stroke="#d0141b" strokeWidth="2.500" />
      <path d="M606 602h10" stroke="#ddd" strokeWidth="4" />
    </g>

    {/* second floor plan */}
    <g transform="translate(440 330) scale(.33333)" fill="none">
      <path d="M93 50h22v48h18v79h241v110h146v43H93z" fill="#fe0000" />
      <path d="M93 48h430v240M374 180v106M374 284h150" stroke="#d9dadc" strokeWidth="5" />
      <path d="M522 290v40" stroke="#ddd" strokeWidth="5" />
      <path d="M240 54v44M290 54v42M330 54v42M376 54v42M412 54v42M450 54v42M190 96h280M482 100v190M482 140h36M482 172h36M482 210h36M482 244h36M130 96h40M115 52v44M440 95h44" stroke="#7b8087" strokeWidth="2.500" />
      <path d={scatter(41, 46, 130, 60, 345, 110, 8, 38) + scatter(42, 26, 380, 180, 95, 95, 8, 32)} stroke="#5d636a" strokeWidth="2" />
      <path d={scatter(43, 90, 110, 56, 385, 108, 8, 50) + scatter(44, 56, 380, 160, 104, 112, 6, 32) + scatter(45, 24, 484, 90, 26, 170, 6, 26)} stroke="#3f9c14" strokeWidth="2.500" />
      <path d="M93 126h28v68M93 136h18v20M180 72h140v8H178M168 70v80h70M248 60v116M256 176v-52h90v14h100v150M272 132h170M262 150h40q16-14 30-6l40 20M400 120v50h46M340 124l20 14M496 70v90l10 20v60M170 118h50v40h-60" stroke="#4fc117" strokeWidth="3" />
      <path d="M280 140h34v20h-34zM150 60v40M396 170v60M93 132h34v60" stroke="#7a9c16" strokeWidth="3" />
      <path d="M140 66h10v24h-10zM214 110v50" stroke="#b98a56" strokeWidth="2.500" />
      {[126, 160, 180, 208, 222, 254, 284, 316, 348, 376, 408, 438, 468].map((x) => <path key={x} d={`M${x} 36h4v10h-4z`} fill="#c9c90a" />)}
      {[66, 76, 96, 130, 184, 214, 240, 270].map((y) => <path key={y} d={`M524 ${y}h6v7h-6z`} fill="#b9b90a" />)}
      <path d={specks(51, 46, 120, 62, 380, 104, 5, 5) + specks(52, 30, 378, 176, 110, 94, 5, 5)} fill="#dcd70c" />
      <path d="M240 98h12v12h-12zM308 98h14v14h-14zM408 98h12v12h-12zM455 104h12v12h-12zM462 152h14v8h-14zM464 234h12v12h-12zM141 110h10v10h-10zM282 144h12v10h-12z" stroke="#d9d40e" strokeWidth="3" />
      <path d={specks(53, 12, 240, 84, 220, 10) + specks(54, 10, 484, 120, 12, 140) + specks(55, 2, 188, 42, 10, 4)} fill="#b564a8" />
      <path d="M368 218v18M396 190v8" stroke="#fff000" strokeWidth="5" />
      <g transform="translate(93 196)"><Core c="#ffc6c6" x2={-20} sw={2.500} /></g>
      <path d="M133 180h36M150 184v14h24" stroke="#ffb0b0" strokeWidth="2.500" />
      <path d="M285 220h34v44h-34z" stroke="#ffe0e0" strokeWidth="2.500" />
      <path d="M326 283h8v8h-8zM418 282h8v8h-8zM514 192h10v10h-10zM514 280h10v10h-10zM364 282h8v8h-8z" fill="#eee" />
      <path d="M548 194h6v3h-6z" fill="#1a7a2a" />
    </g>

    {/* key plan */}
    <g transform="translate(610 310) scale(.33333)" fill="none">
      <path d="M132 118h659v384H132z" fill="#c1c1c2" />
      <path d="M386 122h402v232H642V242H401V166h-15z" fill="#212830" />
      <path d="M131 117h659v384H131z" stroke="#d0d2d4" strokeWidth="7" />
      <path d="M134 120h654v378H134z" stroke="#9da1a6" strokeWidth="1.500" />
      <path d="M320 501v10h284v-10" stroke="#d4d6d8" strokeWidth="5" />
      {[343, 367, 390, 436, 460, 482, 530, 553, 578].map((x) => <path key={x} d={`M${x - 7} 509q7 8 14 0`} stroke="#eee" strokeWidth="2.500" />)}
      <path d="M133 262v92" stroke="#59616b" strokeWidth="5" />
      <path d="M440 163h348M510 124v40M537 124v40M568 124v40M598 124v40M630 124v40M661 124v40M692 124v40M722 124v40M752 166v188M752 208h38M752 268h38M752 292h38M752 323h38M401 166v76M401 218h40v24M421 218v24M480 180v62M507 180v62M480 180h8M612 234h16v10M642 250v104M642 268h40M684 258v62M684 258h28M684 290h14M642 318h56M642 354h150M642 244h148" stroke="#b9bcc0" strokeWidth="3.500" />
      <path d="M388 122v44M398 168h20M440 122v40M407 132h11v22h-11zM656 244h94M646 324h54M642 350h108M716 350h34M484 182v34" stroke="#a1744f" strokeWidth="3" />
      <path d="M480 216h6v28h-6z" fill="#9b4a52" />
      {[228, 320, 413, 506, 598, 692].map((x) => <path key={x} d={`M${x - 4} 118h8v8h-8zM${x - 4} 493h8v8h-8z`} fill="#ececec" />)}
      <path d="M224 258h9v9h-9zM317 258h9v9h-9zM409 258h9v9h-9zM224 350h9v9h-9zM688 350h9v9h-9zM595 350h9v9h-9zM784 258h8v9h-8zM784 350h8v9h-8zM129 258h8v9h-8zM129 350h8v9h-8zM128 114h9v9h-9zM784 114h9v9h-9zM128 494h9v9h-9zM784 494h9v9h-9z" fill="#e9e9e9" />
      <g stroke="#fff" strokeWidth="3">
        <path d="M292 292h26v64h-26zM298 306h14M296 316h18M296 324h18M296 332h18M296 340h18M296 348h18M320 272h92v84h-92zM328 278h46v50h-46zM340 290h22v24h-22zM326 334h44v20h-44zM378 276h30v76h-30zM384 284v60M390 284v60M396 284v60M402 300v40" />
        <path d="M416 296h25v60h-25zM416 326h25M480 296h26v60h-26zM480 326h26M443 250v108M479 260v98h28M479 260h60v28M512 264h34v80h-34zM520 264v80M528 290v50M540 262h88v84h-88zM550 296h36v42h-36zM558 304h20v24h-20zM546 266h50v20h-50zM602 262h24v60h-24zM605 270h18M605 280h18M605 290h18M605 300h18M605 310h18M322 260v12" />
        <path d="M283 357h200M283 357v18h160M312 378h130v-4h10M452 370v8h10v-8h10v8h10v-18" strokeWidth="4" />
        <circle cx="429" cy="310" r="8" /><circle cx="429" cy="338" r="8" /><circle cx="492" cy="310" r="8" /><circle cx="492" cy="338" r="8" /><circle cx="533" cy="272" r="8" /><circle cx="388" cy="346" r="7" /><circle cx="524" cy="336" r="7" />
        <path d="M592 494v-8q-10-8 0-14 8-10 15 0v24" />
      </g>
      <path d="M444 238l8-8v4h16v-4l12 8v4h-36z" fill="#5fe8ee" />
      <path d="M700 261l20-5v10zM698 286l22-5v10zM706 326h6l-3 22zM748 326h6l-3 22zM336 514h8v6h-8zM466 513h8v6h-8z" fill="#3fdbe2" />
      <path d="M322 516h14M476 515h12M546 519h3" stroke="#2aa8b0" strokeWidth="2" />
      <path d="M428 260l14-4v5z" fill="#5ee85a" />
      <path d="M297 184h5v5h-5z" fill="#ece81c" />
      <path d="M522 124q0 20-12 38M568 160q-8-10-14 2M630 160q-8-10-14 2M692 160q-8-10-14 2M758 176q8 0 14-8M700 270q8 0 10 8M754 250q10 0 12 10M660 350q8-14 14-26" stroke="#5b5a40" strokeWidth="2" />
      <path d={cloud} stroke="#fb0204" strokeWidth="6" strokeLinecap="round" />
    </g>

    <path d="M552 271.500H612L628 322" stroke="#f80405" strokeWidth="2" fill="none" />
    {/* sheet outline running below the view */}
    <path d="M174.500 625V606.500H375" stroke="#a6aab0" fill="none" />
    <path d="M188.500 625v-15H375" stroke="#2e3640" fill="none" />
    <path d="M284 623l3-4 2 4M291 622l3-4 3 4M300 619q3-2 4 3l4-4M312 618l3 2M315 620l5-4-2-2M324 617l3-2M330 616l4-2" stroke="#7c1620" fill="none" strokeWidth="1.300" />
  </svg>
);

const Workspace = () => (
  <div className="flex h-[450px] bg-[#212830]">
    <aside className="flex h-[450px] w-[13px] shrink-0 flex-col gap-[3px] bg-[#272e39] pb-[2px] pr-px pt-[3px] text-[7.100px] text-[#b9bec6]">
      <div className="flex h-[220px] items-center justify-center bg-[#3b4453]"><span className="rotate-180 whitespace-nowrap leading-[10px] [writing-mode:vertical-rl]">Layer Properties Manager</span></div>
      <div className="flex h-[222px] items-center justify-center bg-[#3b4453]"><span className="rotate-180 leading-[10px] [writing-mode:vertical-rl]">Properties</span></div>
    </aside>
    <main className="relative h-[450px] w-[932px] shrink-0 overflow-hidden">
      <Drawing />
      <span className="absolute left-[2px] top-[3px] text-[7.350px] leading-[12px] text-[#c3c7cc]">[−][Top][2D Wireframe]</span>
      <div className="absolute left-[15px] top-[44px] h-[104px] w-[526px] whitespace-nowrap border-2 border-[#f80405] bg-white pl-[7px] pt-[2px] font-['Liberation_Sans',Arial,sans-serif] text-[38px] leading-[44px] text-[#fb0204]">
        If you have a key plan in your<br />cad, add a viewport for it
      </div>
      <div className="absolute left-[360px] top-[429px] flex h-[19px] w-[328px] bg-[#2b333f]">
        <div className="flex w-[37px] shrink-0 items-center pl-[3px] text-[#bfc4ca]">
          <Grip /><X className="ml-[3px] size-[9px]" strokeWidth={3} /><Wrench className="ml-[6px] size-[11px]" strokeWidth={2.500} />
        </div>
        <div className="flex flex-1 items-center bg-[#bbbcbe] pl-[3px]">
          <svg viewBox="0 0 12 9" className="h-[8px] w-[10px]"><path d="M.5.500h11v8H.5z" fill="#c9cacc" stroke="#666" /><path d="M0 1.500h12" stroke="#666" /><path d="M2 4l2 1.500L2 7" fill="none" stroke="#666" /></svg>
          <svg viewBox="0 0 5 3" className="ml-[2px] h-[3px] w-[5px]"><path d="M0 0h5L2.500 3z" fill="#444" /></svg>
          <span className="ml-[3px] font-['Liberation_Mono',monospace] text-[7.800px] italic text-[#4d4e51]">Type a command</span>
          <span className="-ml-[4px] mb-[-5px] h-[14px] w-[26px] border-r border-t border-[#d0d1d2]" />
          <svg viewBox="0 0 5 3" className="ml-auto mr-[3px] h-[3px] w-[5px]"><path d="M0 3h5L2.500 0z" fill="#444" /></svg>
        </div>
      </div>
    </main>
  </div>
);

/* ---------- status bar ---------- */
const S = ({ w, on, children }) => (
  <span className={'flex h-[15px] shrink-0 items-center justify-center ' + w + (on ? ' bg-[#5a88bd]' : '')}>
    <svg viewBox="0 0 12 12" className="size-[11px] shrink-0" fill="none" stroke={on ? '#e9f1fa' : '#b9bec6'} strokeWidth="1.200">{children}</svg>
  </span>
);
const Box = ({ w, children }) => <div className={'flex h-[15px] shrink-0 items-center bg-[#343d4b] ' + w}>{children}</div>;
const man = 'M6 1v4L2 11h2l2-3 2 3h2L6 5';

const StatusBar = () => (
  <div className="flex h-[22px] items-center border-t-[2px] border-[#323a47] bg-[#222933] pb-[1px] text-[7.300px] text-[#c3c8cf]">
    <Menu className="ml-[7px] size-[13px] shrink-0" strokeWidth={2.500} />
    <div className="ml-[5px] flex h-[16px] w-[45px] shrink-0 items-center bg-[#3b4453] pl-[10px] font-bold text-white [clip-path:polygon(6px_0,100%_0,39px_100%,0_100%)]">Model</div>
    <span className="ml-[3px] w-[26px] shrink-0">18X24</span><Slash />
    <span className="ml-[4px] w-[17px] shrink-0">FP1</span><Slash />
    <span className="ml-[5px] w-[25px] shrink-0">30X42</span><Slash />
    <span className="ml-[6px] w-[25px] shrink-0">36X48</span><Slash />
    <Plus className="ml-[5px] size-[12px] shrink-0" strokeWidth={2.500} /><Slash c="ml-[5px]" />
    <div className="ml-[12px] flex h-[15px] w-[114px] shrink-0 items-center justify-end whitespace-nowrap bg-[#3b4453] pr-[3px] font-semibold text-[#dde0e5]">85'-5 3/8", -35'-5 7/8", 0'-0"</div>
    <div className="ml-[2px] flex h-[15px] w-[31px] shrink-0 items-center justify-center bg-[#3b4453] font-semibold text-[#dde0e5]">MODEL</div>
    <Box w="ml-[3px] w-[41px]">
      <S w="w-[15px]"><path d="M0 4h12M0 8h12M4 0v12M8 0v12" /></S><S w="w-[14px]"><path d="M1.500 2.500h1.500M5.500 2.500H7M9.500 2.500H11M1.500 6h1.500M5.500 6H7M9.500 6H11M1.500 9.500h1.500M5.500 9.500H7M9.500 9.500H11" strokeWidth="1.500" /></S><Caret c="ml-px" />
    </Box>
    <Box w="ml-[2px] w-[135px]">
      <S w="w-[14px]"><path d="M1 7h5v4H1zM7 1h4v4H7zM7 1v8" fill="#b9bec6" /></S>
      <S w="w-[14px] ml-px" on><path d="M3 1v6M0 4h6M5 8h7v2H5z" /></S>
      <S w="w-[14px] ml-[2px]" on><path d="M2 1v9h10M2 7h3v3" /></S>
      <S w="w-[18px]"><circle cx="5" cy="7" r="4" /><path d="M5 7h6M5 7l4-5" /></S><Caret />
      <S w="w-[20px]"><path d="M2 1l8 10M6 0v12" /><path d="M7 6l3-4" stroke="#d55" /></S><Caret />
      <S w="w-[24px]"><path d="M10 2L2 10h9" /></S>
      <S w="w-[10px]"><path d="M2 3h8v8H2z" /><path d="M0 3h4M2 1v4" stroke="#d77" /></S>
      <Caret />
    </Box>
    <Box w="ml-[2px] w-[72px]">
      <S w="w-[14px] ml-[2px]"><path d="M1 3h10M1 6h10M1 9h10" strokeWidth="2" /></S>
      <S w="w-[14px] ml-[2px]" on><path d="M1 2h10M1 6h10M1 10h10M3 4h8M3 8h8" strokeWidth="2" strokeDasharray="2 2" /></S>
      <S w="w-[18px]"><path d="M3 0v6M0 3h6" /><path d="M4 5h7v7H4z" fill="#7fc99a" stroke="none" /></S>
      <S w="w-[14px]" on><path d="M1 4h7v7H1zM1 4l3-3h7v7l-3 3M8 4l3-3" /></S><Caret c="ml-[2px]" />
    </Box>
    <Box w="ml-[3px] w-[66px]">
      <S w="w-[16px]"><path d="M2 1v9h9M5 7l5-5M2 4h3M8 10V7" /></S>
      <S w="w-[17px]"><path d="M2 3h7v7H2z" /><path d="M1 2h2M8 2h2M1 10h2M8 10h2" stroke="#5fb0f0" strokeWidth="2" /></S><Caret c="ml-px" />
      <S w="w-[14px] ml-[3px]" on><path d="M6 1v10M1 9q0-7 5-7t5 7zM3 9l3-4 3 4" /></S><Caret c="ml-[2px]" />
    </Box>
    <Box w="ml-[3px] w-[91px]">
      <S w="w-[14px]" on><path d={man} strokeWidth="2" /><circle cx="10" cy="2" r="1.500" /></S>
      <S w="w-[16px]"><path d={man} strokeWidth="1.800" /><path d="M9 1l2 2" /></S>
      <S w="w-[15px]"><path d={man} strokeWidth="2" /></S>
      <span className="w-[38px] shrink-0 whitespace-nowrap pl-[3px] tracking-[-0.250px]">1:1 / 100%</span><Caret />
    </Box>
    <Box w="ml-[3px] w-[25px]"><FaGear className="ml-[2px] size-[10px] shrink-0" /><Caret c="ml-[4px]" /></Box>
    <Box w="ml-px w-[14px] justify-center"><Plus className="size-[12px] shrink-0" strokeWidth={2.500} /></Box>
    <Box w="ml-[3px] w-[76px]">
      <svg viewBox="0 0 6 10" className="ml-[4px] h-[10px] w-[6px] shrink-0"><path d="M0 0h6v10H0z" fill="#cfd3d8" /><path d="M3 2h3M4 4h2M3 6h3M4 8h2" stroke="#333" strokeWidth=".8" /></svg>
      <span className="ml-[7px] w-[49px] shrink-0 font-semibold tracking-[-0.150px]">Architectural</span><Caret />
    </Box>
    <Box w="ml-[2px] w-[10px]"><S w="w-[14px]"><path d="M1 1h10v10H1zM1 4h10M4 4v7M1 7h10" /></S></Box>
  </div>
);

/* ---------- taskbar ---------- */
const apps = [
  <><path d="M0 0h7.500v7.500H0zM8.500 0H16v7.500H8.500zM0 8.500h7.500V16H0zM8.500 8.500H16V16H8.500z" fill="#4cc2f5" /></>,
  <><path d="M0 5h10v9H0z" fill="#6d6d6d" /><path d="M5 1h11v10H5z" fill="#e4e4e4" /></>,
  <><path d="M0 1h6l2 2h8v12H0z" fill="#f7c945" /><path d="M0 5h16v4H0z" fill="#ffd968" /><path d="M3 11h10v4H3z" fill="#1f78cf" /></>,
  <><circle cx="8" cy="8.500" r="7" fill="#ff8a1e" /><path d="M1 6l2-4 2 3 4-5q6 4 6 8-3-4-6-3z" fill="#ffd23c" /><circle cx="8" cy="9" r="3.600" fill="#8a3bd8" /><path d="M1.500 8q0 8 7 7.500Q3 13 4 7z" fill="#f5384a" /></>,
  <><circle cx="8" cy="8" r="7.500" fill="#e8453c" /><path d="M1.500 4.300L5 11l3 4.500Q0 15 .5 7z" fill="#2fa854" /><path d="M8 4.500h7q3 10-7 11l3-5z" fill="#fcc934" /><circle cx="8" cy="8" r="3.600" fill="#fff" /><circle cx="8" cy="8" r="2.800" fill="#3f82f0" /></>,
  <><rect x=".5" y=".5" width="15" height="15" rx="4" fill="#222" stroke="#ddd" strokeWidth="1.500" /><path d="M11 5.500a4 4 0 1 0 0 5" stroke="#fff" strokeWidth="1.500" fill="none" /><circle cx="9" cy="8" r="2.300" fill="#f03a5a" /><path d="M9 8h5" stroke="#fff" /></>,
  <><circle cx="8" cy="8" r="7.500" fill="#20c35d" /><path d="M3.500 5.500q5-1.500 9 .8M4 8.200q4-1.200 7.500.8M4.500 10.800q3.500-1 6 .6" stroke="#0b2b17" strokeWidth="1.400" fill="none" /></>,
  <><path d="M0 0h16v16H0z" fill="#8a3fb8" /><path d="M0 0h8v8z" fill="#2f6bea" /><path d="M8 0h8v16z" fill="#e8343c" /><path d="M5 12V7q0-4 3-4t3 4-3 4-2-3 2-2M9 12h3" stroke="#f3dce8" strokeWidth="1.200" fill="none" /></>,
  <><circle cx="8" cy="8" r="7.500" fill="#119fe0" /><path d="M3.500 13.500Q4 5 8 3.500q5-1 4.500 1.500Q12 8 6.500 8.500L12 13" stroke="#fff" strokeWidth="1.800" fill="none" /></>,
  <><circle cx="11" cy="5" r="2.500" fill="#7b83eb" /><path d="M6 6h9v7q-4 4-8 0z" fill="#5059c9" /><path d="M0 4h9v9H0z" fill="#4048b0" /><path d="M2 6h5M4.500 6v5" stroke="#fff" strokeWidth="1.200" /><circle cx="12.500" cy="2" r="4.500" fill="#13a10e" /><path d="M10.500 2l1.500 1.500L14.500 1" stroke="#0a4a08" fill="none" /></>,
  <><path d="M4 1h11v14H4z" fill="#1a8ee0" /><path d="M8 7h8v7H5z" fill="#50c4f5" /><path d="M0 4h9v9H0z" fill="#0f64b8" /><circle cx="4.500" cy="8.500" r="2.300" stroke="#fff" strokeWidth="1.300" fill="none" /></>,
  <><path d="M0 0h16v16H0z" fill="#e9e9e9" /><path d="M0 0h9L3 16H0z" fill="#c1121f" /><path d="M5 14q0-9 5-11 4 3 4 11M6 9h7M9 5v8" stroke="#444" strokeWidth="1.600" fill="none" /></>,
  <><ellipse cx="8" cy="9" rx="6" ry="7" fill="#2c8ad8" /><ellipse cx="8" cy="10" rx="4" ry="5" fill="#f4f4f4" /><circle cx="6" cy="5" r="2" fill="#fff" /><circle cx="10" cy="5" r="2" fill="#fff" /><path d="M6 7h4L8 9z" fill="#f5a31c" /><path d="M3 15h4M9 15h4" stroke="#f5a31c" strokeWidth="2" /><circle cx="6.300" cy="5" r=".8" /><circle cx="9.700" cy="5" r=".8" /></>,
  <><path d="M4 1h12v14H4z" fill="#1f9e5c" /><path d="M10 1h6v7h-6z" fill="#36c481" /><path d="M0 4h9v9H0z" fill="#107c41" /><path d="M2.500 6l4 5M6.500 6l-4 5" stroke="#fff" strokeWidth="1.300" /></>,
  <><rect y="1" width="16" height="14" rx="1" fill="#3c3c3c" /><path d="M0 1h16v2.500H0z" fill="#bdbdbd" /><path d="M2.500 6l3 2.500-3 2.500M8 11.500h5" stroke="#fff" strokeWidth="1.300" fill="none" /></>,
  <><path d="M12 0l4 2v12l-4 2-7-6.500L2 12l-2-1 3-3-3-3 2-1 3 2.500zM12 5L8 8l4 3z" fill="#1f9cf0" fillRule="evenodd" /></>,
  <><rect x=".5" y=".5" width="15" height="15" rx="2" fill="#1c55b8" /><path d="M.5 15l7.500-9 7.500 9z" fill="#58b4f5" /><path d="M4 15l4-4 5 4z" fill="#9fd8fb" /><circle cx="12" cy="4" r="1.500" fill="#fff" /></>,
  <><rect x="0" y="4" width="11" height="12" rx="1" fill="#eee" /><path d="M2 6h7v6H2z" fill="none" stroke="#e0402a" strokeWidth="1.600" strokeDasharray="2 1" /><circle cx="13" cy="13" r="1.800" stroke="#2a8fd8" fill="none" /></>,
];

const Taskbar = () => (
  <div className="flex h-[22px] items-center bg-black pl-[4px] pt-[6px]">
    {apps.map((a, i) => (
      <span key={i} className={'flex w-[27.900px] shrink-0 justify-center' + (i === 11 ? ' bg-[#141414]' : '')}><svg viewBox="0 0 16 16" className="size-[15px] overflow-visible">{a}</svg></span>
    ))}
    <div className="ml-auto flex w-[93px] items-center text-[#d5d8dc]">
      <ChevronUp className="ml-px size-[9px] shrink-0" strokeWidth={3} />
      <svg viewBox="0 0 10 10" className="ml-[11px] size-[10px] shrink-0"><path d="M0 0h10v10H0z" fill="#b8a88a" /><path d="M2 1h2v6H2z" fill="#e84a2a" /><path d="M4 1h2v6H4z" fill="#f3d21c" /><path d="M6 1h2v6H6z" fill="#2fb6c0" /></svg>
      <svg viewBox="0 0 12 8" className="ml-[10px] h-[8px] w-[11px] shrink-0"><path d="M2.500 8a2.500 2.500 0 0 1 0-5Q4 0 7 1t2.500 3a2 2 0 0 1 0 4z" fill="#1490df" /></svg>
      <Mic className="ml-[9px] size-[11px] shrink-0 text-[#7f9aa8]" strokeWidth={2.500} />
      <Wifi className="ml-[9px] size-[11px] shrink-0" strokeWidth={2.500} />
    </div>
  </div>
);

export default function App() {
  return (
    <div className="flex h-[669px] w-[945px] flex-col overflow-hidden bg-[#222933] font-['Open_Sans','Noto_Sans',sans-serif]">
      <Header />
      <Ribbon />
      <FileTabs />
      <Toolbars />
      <Workspace />
      <StatusBar />
      <Taskbar />
    </div>
  );
}
